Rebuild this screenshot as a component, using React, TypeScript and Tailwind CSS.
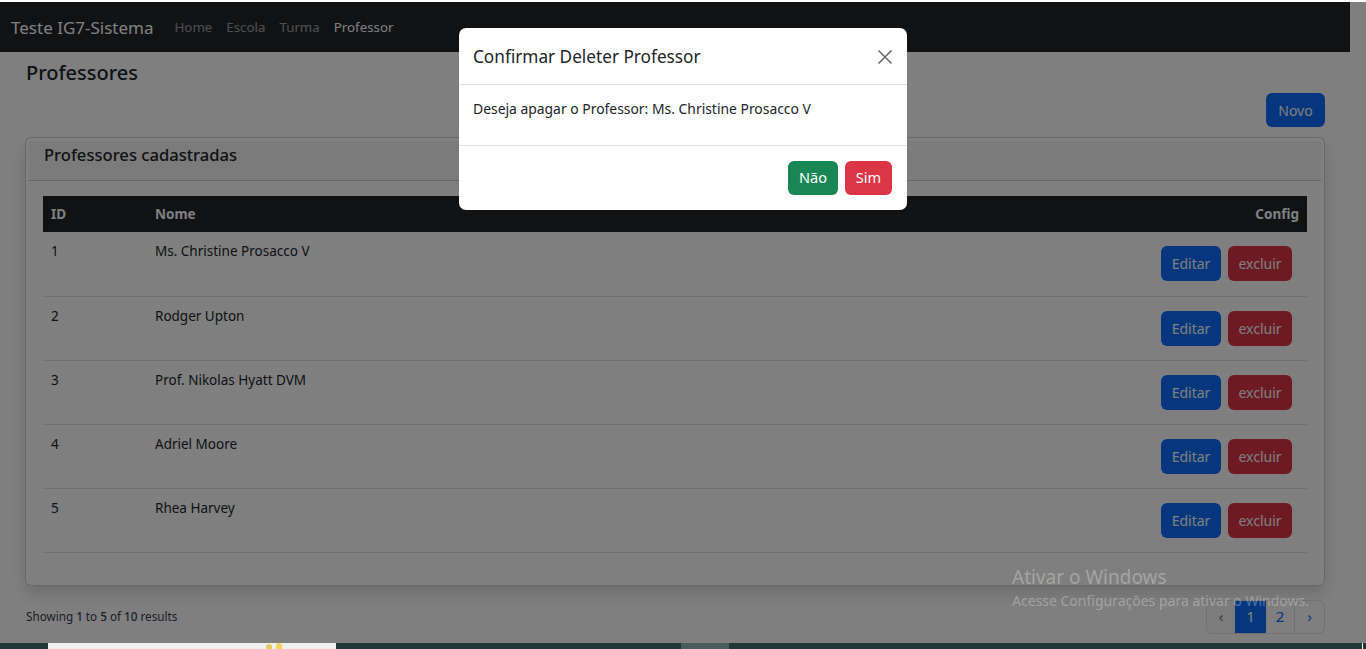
import React from "react";

const rows = [
  { id: 1, nome: "Ms. Christine Prosacco V" },
  { id: 2, nome: "Rodger Upton" },
  { id: 3, nome: "Prof. Nikolas Hyatt DVM" },
  { id: 4, nome: "Adriel Moore" },
  { id: 5, nome: "Rhea Harvey" },
];

export default function App() {
  return (
    <div
      className="w-[1366px] h-[649px] overflow-hidden bg-white flex flex-col text-[#212529]"
      style={{ fontFamily: '"Noto Sans", "Open Sans", sans-serif' }}
    >
      <div className="h-[2px] bg-white shrink-0" />
      <div className="relative h-[641px] shrink-0 bg-white">
        {/* Page */}
        <div className="w-[1350px] flex flex-col">
          <nav className="h-[50px] bg-[#212529] flex items-center pl-[11px] pt-[1px]">
            <span className="text-[17px] text-white mr-[21px]">Teste IG7-Sistema</span>
            <div className="flex items-center gap-[14px] text-[13.3px]">
              <span className="text-white/55">Home</span>
              <span className="text-white/55">Escola</span>
              <span className="text-white/55">Turma</span>
              <span className="text-white">Professor</span>
            </div>
          </nav>
          <div className="px-[25px] flex flex-col">
            <h2 className="mt-[8px] leading-[26px] text-[20px] font-medium pl-[1px]">Professores</h2>
            <div className="flex justify-end mt-[7px]">
              <button className="h-[34px] w-[59px] rounded-[6px] bg-[#0d6efd] text-white text-[14px]">Novo</button>
            </div>
            <div className="mt-[10px] border border-black/[0.175] rounded-[6px] p-[3px] bg-white shadow-[0_8px_16px_rgba(0,0,0,0.15)]">
              <div className="h-[40px] px-[15px] pt-[2px] border-b border-black/[0.175] bg-black/[0.03]">
                <span className="text-[16.6px] leading-[24px] font-medium">Professores cadastradas</span>
              </div>
              <div className="px-[14px] pt-[15px] pb-[13px]">
                <table className="w-full mb-[16px] text-[13.5px] border-collapse">
                  <thead>
                    <tr className="h-[36px] bg-[#212529] text-white font-bold">
                      <th className="w-[104px] text-left px-[8px]">ID</th>
                      <th className="text-left px-[8px]">Nome</th>
                      <th className="text-right px-[8px]">Config</th>
                    </tr>
                  </thead>
                  <tbody>
                    {rows.map((r) => (
                      <tr key={r.id} className="border-b border-[#dee2e6] h-[64px]">
                        <td className="align-top px-[8px] pt-[9px] leading-[21px]">{r.id}</td>
                        <td className="align-top px-[8px] pt-[9px] leading-[21px]">{r.nome}</td>
                        <td className="align-top pt-[14px] pr-[15px]">
                          <div className="flex justify-end gap-[7px]">
                            <button className="h-[35px] w-[60px] rounded-[6px] bg-[#0d6efd] text-white text-[14px]">Editar</button>
                            <button className="h-[35px] w-[64px] rounded-[6px] bg-[#dc3545] text-white text-[14px]">excluir</button>
                          </div>
                        </td>
                      </tr>
                    ))}
                  </tbody>
                </table>
              </div>
            </div>
            <div className="mt-[14px] flex items-center justify-between h-[34px]">
              <span className="text-[11.7px] text-[#374151] pl-[1px] pt-[1px]">
                Showing <span className="font-medium">1</span> to <span className="font-medium">5</span> of{" "}
                <span className="font-medium">10</span> results
              </span>
              <div className="flex h-[34px] border border-[#dee2e6] rounded-[6px] overflow-hidden text-[15px]">
                <span className="w-[28px] flex items-center justify-center text-[#6c757d] bg-[#f8f9fa]">‹</span>
                <span className="w-[31px] flex items-center justify-center bg-[#0d6efd] text-white">1</span>
                <span className="w-[29px] flex items-center justify-center text-[#0d6efd] border-r border-[#dee2e6]">2</span>
                <span className="w-[29px] flex items-center justify-center text-[#0d6efd]">›</span>
              </div>
            </div>
          </div>
        </div>

        {/* Backdrop */}
        <div className="absolute inset-0 bg-black/50" />

        {/* Modal */}
        <div className="absolute left-[459px] top-[26px] w-[448px] bg-white rounded-[7px] flex flex-col">
          <div className="h-[57px] px-[14px] pt-[1px] flex items-center justify-between border-b border-[#dee2e6]">
            <span className="text-[17.2px] text-[#212529]">Confirmar Deleter Professor</span>
            <svg width="16" height="16" viewBox="0 0 16 16">
              <path d="M1.5 1.5 L14.5 14.5 M14.5 1.5 L1.5 14.5" stroke="#6b6b6b" strokeWidth="1.6" />
            </svg>
          </div>
          <div className="h-[61px] px-[14px] pt-[13px] border-b border-[#dee2e6]">
            <p className="text-[13.9px] leading-[21px] text-[#212529]">Deseja apagar o Professor: Ms. Christine Prosacco V</p>
          </div>
          <div className="h-[64px] px-[15px] flex items-center justify-end gap-[7px]">
            <button className="h-[34px] w-[50px] rounded-[6px] bg-[#198754] text-white text-[14.5px]">Não</button>
            <button className="h-[34px] w-[47px] rounded-[6px] bg-[#dc3545] text-white text-[14.5px]">Sim</button>
          </div>
        </div>

        {/* Windows watermark */}
        <div className="absolute left-[1012px] top-[562px] text-white/30 leading-none">
          <div className="text-[19px] leading-[26px]">Ativar o Windows</div>
          <div className="text-[14px] leading-[20px] mt-[1px]">Acesse Configurações para ativar o Windows.</div>
        </div>
      </div>

      {/* Taskbar strip */}
      <div className="h-[6px] shrink-0 bg-[#203737] relative">
        <div className="absolute left-[48px] top-0 w-[288px] h-[6px] bg-[#f0f0f0]">
          <div className="absolute left-[218px] top-[1px] w-[6px] h-[5px] bg-[#e8c860] rounded-t-sm" />
          <div className="absolute left-[228px] top-0 w-[6px] h-[6px] bg-[#f2d25a] rounded-t-sm" />
        </div>
        <div className="absolute left-[681px] top-0 w-[48px] h-[6px] bg-[#4a5c5c]" />
        <div className="absolute left-[1362px] top-0 w-[1px] h-[6px] bg-white" />
      </div>
    </div>
  );
}
